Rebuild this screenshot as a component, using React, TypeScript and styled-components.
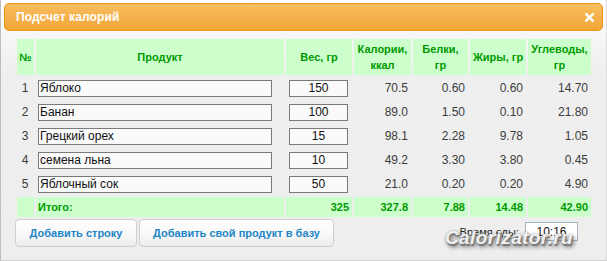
import React from 'react'
import styled, { createGlobalStyle } from 'styled-components'

const GlobalStyle = createGlobalStyle`
    html, body {
        margin:0;
        padding:0;
        background:#fff;
    }
    body {
        font-family:"Liberation Sans", Arial, sans-serif;
    }
`

const Frame = styled.div`
    position:relative;
    box-sizing:border-box;
    width:607px;
    height:261px;
    border-left:1px solid #bdbdbd;
    border-right:1px solid #dcdcdc;
    border-bottom:1px solid #d2d2d2;
    background:linear-gradient(to bottom, #fdfdfd 0px, #f7f7f7 34px, #efefef 70px, #eeeeee 100%);
    overflow:hidden;
`

const TitleBar = styled.div`
    box-sizing:border-box;
    margin:3px 3px 0 3px;
    height:28px;
    border:1px solid #eb9516;
    border-radius:5px;
    background:linear-gradient(to bottom, #f7be5f 0%, #f5b04a 55%, #f3a634 100%);
    display:flex;
    align-items:center;
    justify-content:space-between;
    padding:0 8px 0 11px;
`

const Title = styled.span`
    color:#fff;
    font-weight:700;
    font-size:12px;
    letter-spacing:0.1px;
`

const CloseButton = styled.button`
    border:0;
    padding:0;
    background:none;
    width:9px;
    height:9px;
    display:flex;
    cursor:pointer;
`

const Content = styled.div`
    padding:6px 28px 0 14px;
`

const Table = styled.table`
    border-collapse:separate;
    border-spacing:2px;
    table-layout:fixed;
    width:578px;
    font-size:12px;
    color:#3c3c3c;
`

const HeadCell = styled.th`
    height:36px;
    padding:0 2px;
    background:#ccffcc;
    color:#009a00;
    font-size:11px;
    font-weight:700;
    line-height:16px;
    text-align:center;
    vertical-align:middle;
`

const Cell = styled.td<{ $align?: string }>`
    height:22px;
    padding:0 3px 0 2px;
    text-align:${p => p.$align || 'right'};
    vertical-align:middle;
    white-space:nowrap;
`

const TotalCell = styled.td<{ $align?: string }>`
    height:20px;
    padding:0 3px 0 2px;
    background:#ccffcc;
    color:#009a00;
    font-size:11px;
    font-weight:700;
    text-align:${p => p.$align || 'right'};
    vertical-align:middle;
`

const Field = styled.input<{ $width: number; $center?: boolean }>`
    box-sizing:border-box;
    display:block;
    width:${p => p.$width}px;
    height:17px;
    margin:${p => p.$center ? '0 auto' : '0'};
    padding:0 1px;
    border:1px solid #7a7a7a;
    background:#fafafa;
    font-family:"Liberation Sans", Arial, sans-serif;
    font-size:12px;
    color:#111;
    text-align:${p => p.$center ? 'center' : 'left'};
    outline:none;
`

const Footer = styled.div`
    display:flex;
    align-items:flex-start;
`

const Button = styled.button<{ $width: number }>`
    box-sizing:border-box;
    width:${p => p.$width}px;
    height:28px;
    margin-right:2px;
    padding:0;
    border:1px solid #cfcfcf;
    border-radius:4px;
    background:linear-gradient(to bottom, #ffffff 0%, #f7f7f7 60%, #ececec 100%);
    color:#1d86c6;
    font-family:"Liberation Sans", Arial, sans-serif;
    font-size:11px;
    font-weight:700;
    white-space:nowrap;
    cursor:pointer;
`

const TimeGroup = styled.label`
    margin-left:auto;
    margin-top:3px;
    display:flex;
    align-items:center;
    gap:6px;
    font-size:11px;
    color:#222;
`

const TimeField = styled.input`
    box-sizing:border-box;
    width:53px;
    height:19px;
    border:1px solid #a9b2bf;
    background:#fff;
    font-family:"Liberation Sans", Arial, sans-serif;
    font-size:12px;
    color:#111;
    text-align:center;
    padding:0;
    outline:none;
`

const Watermark = styled.div`
    position:absolute;
    left:444px;
    top:227px;
    font-family:"Liberation Sans", Arial, sans-serif;
    font-style:italic;
    font-weight:700;
    font-size:19px;
    letter-spacing:0.4px;
    color:#f0f0f0;
    text-shadow:1px 2px 1px #777, 2px 3px 4px #555, 0 0 2px #999;
    pointer-events:none;
`

interface Row {
    name: string;
    weight: string;
    kcal: string;
    protein: string;
    fat: string;
    carbs: string;
}

const rows: Row[] = [
    { name: 'Яблоко', weight: '150', kcal: '70.5', protein: '0.60', fat: '0.60', carbs: '14.70' },
    { name: 'Банан', weight: '100', kcal: '89.0', protein: '1.50', fat: '0.10', carbs: '21.80' },
    { name: 'Грецкий орех', weight: '15', kcal: '98.1', protein: '2.28', fat: '9.78', carbs: '1.05' },
    { name: 'семена льна', weight: '10', kcal: '49.2', protein: '3.30', fat: '3.80', carbs: '0.45' },
    { name: 'Яблочный сок', weight: '50', kcal: '21.0', protein: '0.20', fat: '0.20', carbs: '4.90' },
]

const widths = [17, 248, 66, 57, 55, 56, 63]

export default function App() {
    return (
        <React.Fragment>
            <GlobalStyle />
            <Frame>
                <TitleBar>
                    <Title>Подсчет калорий</Title>
                    <CloseButton aria-label="close">
                        <svg width="9" height="9" viewBox="0 0 9 9">
                            <path d="M1.2 1.2 L7.8 7.8 M7.8 1.2 L1.2 7.8" stroke="#fff" strokeWidth="2.4" strokeLinecap="square" />
                        </svg>
                    </CloseButton>
                </TitleBar>
                <Content>
                    <Table>
                        <colgroup>
                            {widths.map((w, i) => <col key={i} style={{ width: w }} />)}
                        </colgroup>
                        <thead>
                            <tr>
                                <HeadCell>№</HeadCell>
                                <HeadCell>Продукт</HeadCell>
                                <HeadCell>Вес, гр</HeadCell>
                                <HeadCell>Калории,<br />ккал</HeadCell>
                                <HeadCell>Белки,<br />гр</HeadCell>
                                <HeadCell>Жиры, гр</HeadCell>
                                <HeadCell>Углеводы,<br />гр</HeadCell>
                            </tr>
                        </thead>
                        <tbody>
                            {rows.map((r, i) => (
                                <tr key={i}>
                                    <Cell $align="center">{i + 1}</Cell>
                                    <Cell $align="left"><Field $width={234} defaultValue={r.name} /></Cell>
                                    <Cell $align="center"><Field $width={59} $center defaultValue={r.weight} /></Cell>
                                    <Cell>{r.kcal}</Cell>
                                    <Cell>{r.protein}</Cell>
                                    <Cell>{r.fat}</Cell>
                                    <Cell>{r.carbs}</Cell>
                                </tr>
                            ))}
                            <tr>
                                <TotalCell />
                                <TotalCell $align="left">Итого:</TotalCell>
                                <TotalCell>325</TotalCell>
                                <TotalCell>327.8</TotalCell>
                                <TotalCell>7.88</TotalCell>
                                <TotalCell>14.48</TotalCell>
                                <TotalCell>42.90</TotalCell>
                            </tr>
                        </tbody>
                    </Table>
                    <Footer>
                        <Button $width={122}>Добавить строку</Button>
                        <Button $width={195}>Добавить свой продукт в базу</Button>
                        <TimeGroup>
                            Время еды:
                            <TimeField defaultValue="10:16" />
                        </TimeGroup>
                    </Footer>
                </Content>
                <Watermark>Calorizator.ru</Watermark>
            </Frame>
        </React.Fragment>
    )
}
